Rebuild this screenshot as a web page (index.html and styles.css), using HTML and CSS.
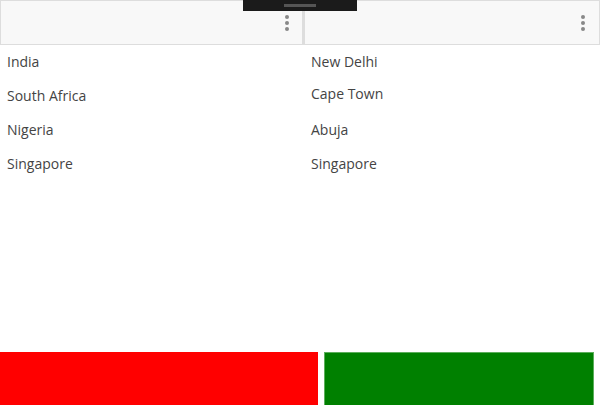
FILE: index.html
```html
<!DOCTYPE html>
<html lang="en">
<head>
  <meta charset="UTF-8">
  <meta name="viewport" content="width=device-width, initial-scale=1.0">
  <title>Capitals</title>
  <link rel="stylesheet" href="styles.css">
</head>
<body>
  <div class="page">
    <div class="grab-tab"><span class="grab-line"></span></div>
    <div class="header">
      <div class="header-cell left">
        <span class="menu-dots"><i></i><i></i><i></i></span>
      </div>
      <div class="header-cell right">
        <span class="menu-dots"><i></i><i></i><i></i></span>
      </div>
    </div>
    <div class="table">
      <ul class="column countries">
        <li>India</li>
        <li>South Africa</li>
        <li>Nigeria</li>
        <li>Singapore</li>
      </ul>
      <ul class="column capitals">
        <li>New Delhi</li>
        <li class="nudge-up">Cape Town</li>
        <li>Abuja</li>
        <li>Singapore</li>
      </ul>
    </div>
    <div class="actions">
      <button class="btn red"></button>
      <button class="btn green"></button>
    </div>
  </div>
</body>
</html>
```

FILE: styles.css
```css
body {
  margin: 0;
  font-family: 'Open Sans', 'Noto Sans', sans-serif;
  color: #444;
  background: #fff;
}
.page {
  position: relative;
  height: 405px;
  display: flex;
  flex-direction: column;
  overflow: hidden;
}
.grab-tab {
  position: absolute;
  top: 0;
  left: 243px;
  width: 114px;
  height: 11px;
  background: #1b1b1b;
  display: flex;
  justify-content: center;
}
.grab-line {
  margin-top: 4px;
  width: 32px;
  height: 3px;
  background: #555;
}
.header {
  display: flex;
  height: 45px;
}
.header-cell {
  box-sizing: border-box;
  background: #f8f8f8;
  border: 1px solid #ddd;
  display: flex;
  justify-content: flex-end;
  align-items: center;
}
.header-cell.left {
  width: 303px;
  padding-right: 13px;
}
.header-cell.right {
  flex: 1;
  border-left-width: 2px;
  padding-right: 14px;
}
.menu-dots {
  display: flex;
  flex-direction: column;
  gap: 2px;
}
.menu-dots i {
  width: 4px;
  height: 4px;
  border-radius: 50%;
  background: #888;
}
.table {
  display: flex;
  padding-top: 6px;
}
.column {
  list-style: none;
  margin: 0;
  padding: 0 0 0 7px;
  box-sizing: border-box;
}
.countries {
  width: 304px;
}
.column li {
  height: 34px;
  line-height: 22px;
  font-size: 14px;
}
.column li.nudge-up {
  margin-top: -2px;
  margin-bottom: 2px;
}
.actions {
  margin-top: auto;
  display: flex;
  gap: 6px;
  height: 53px;
}
.btn {
  border: none;
  padding: 0;
  height: 100%;
}
.btn.red {
  width: 318px;
  background: #ff0000;
}
.btn.green {
  width: 270px;
  background: #008000;
  border: 1px solid #5cae5c;
  border-bottom: none;
}
```
